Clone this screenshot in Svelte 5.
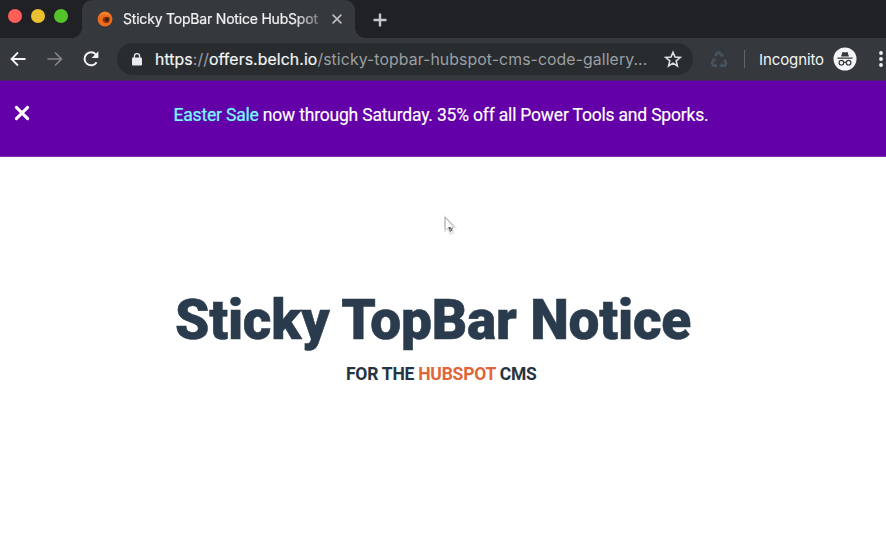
<script>
  const lights = ['#ff5f57', '#e9c12e', '#53c22b'];
</script>

<div class="window">
  <header class="tabs">
    <div class="lights">
      {#each lights as color}
        <i style="background: {color}"></i>
      {/each}
    </div>
    <div class="tab">
      <svg class="favicon" width="16" height="16" viewBox="0 0 16 16">
        <circle cx="8" cy="8" r="7.4" fill="#ee6b1c" />
        <path d="M2 4.5Q8-2 14 5Q8 2 2 4.5Z" fill="#f98a37" />
        <path d="M6 7Q8.5 5.2 12.4 6.2Q13.4 9.5 11 12Q6.4 12.4 5.8 9.4Z" fill="#8a3510" />
        <circle cx="10" cy="8.6" r="2" fill="#4a1a0a" />
      </svg>
      <span class="title">Sticky TopBar Notice HubSpot</span>
      <svg class="close" width="12" height="12" viewBox="0 0 12 12"><path d="M1.6 1.6l8.8 8.8M10.4 1.6l-8.8 8.8" stroke="#bfc1c4" stroke-width="1.5" /></svg>
    </div>
    <svg class="plus" width="14" height="14" viewBox="0 0 14 14"><path d="M7 .5v13M.5 7h13" stroke="#c3c8ca" stroke-width="2.4" /></svg>
  </header>

  <div class="toolbar">
    <svg class="back" width="16" height="16" viewBox="0 0 16 16"><path d="M15.5 8H2M8 1.5L1.5 8L8 14.5" fill="none" stroke="#f3f4f5" stroke-width="1.8" /></svg>
    <svg class="forward" width="16" height="16" viewBox="0 0 16 16"><path d="M.5 8H14M8 1.5L14.5 8L8 14.5" fill="none" stroke="#84868a" stroke-width="1.6" /></svg>
    <svg class="reload" width="18" height="18" viewBox="0 0 18 18">
      <path d="M14.6 12.2A6.5 6.5 0 1 1 13.8 4.4L15 5.8" fill="none" stroke="#f3f4f5" stroke-width="2" />
      <path d="M16.4 1.2V8H9.6Z" fill="#f3f4f5" />
    </svg>
    <div class="address">
      <svg class="lock" width="10" height="13" viewBox="0 0 10 13">
        <rect x="0" y="4.4" width="10" height="8.2" rx="1" fill="#e8eaed" />
        <path d="M2.4 5V3.3a2.6 2.6 0 0 1 5.2 0V5" fill="none" stroke="#e8eaed" stroke-width="1.3" />
      </svg>
      <span class="url"><b>https</b>://<b>offers.belch.io</b>/sticky-topbar-hubspot-cms-code-gallery...</span>
      <svg class="star" width="18" height="18" viewBox="0 0 18 18"><path d="M9 2.3l2 4.8 5.2.4-4 3.4 1.2 5.1L9 13.2l-4.4 2.8 1.2-5.1-4-3.4 5.2-.4Z" fill="none" stroke="#dddfe1" stroke-width="1.6" /></svg>
    </div>
    <svg class="recycle" width="18" height="17" viewBox="0 0 18 17">
      <g fill="none" stroke="#46535e" stroke-width="2.6">
        <path d="M5.1 5.1L7.4 1.8H9.8L11.4 4.4" />
        <path d="M14.4 8.6L16 12.2L14.8 14.6H11.5" />
        <path d="M7 14.6H3.4L2 12L3.4 9.2" />
      </g>
      <path d="M9.6 5.4h4V2ZM12 12v4.8l-2.6-2.4ZM1.2 7.8l4-.8.8 3.6Z" fill="#46535e" />
    </svg>
    <i class="divider"></i>
    <span class="incognito">Incognito</span>
    <svg class="avatar" width="24" height="24" viewBox="0 0 24 24">
      <circle cx="12" cy="12" r="11.5" fill="#f4f5f6" />
      <path d="M8.1 9.5L9.3 5.4Q9.5 4.8 10.2 5L12 5.5L13.8 5Q14.5 4.8 14.7 5.4L15.9 9.5ZM4.5 10.4h15v1.3h-15Z" fill="#34373b" />
      <g fill="none" stroke="#34373b" stroke-width="1.2"><circle cx="8.4" cy="15.7" r="2.3" /><circle cx="15.6" cy="15.7" r="2.3" /><path d="M10.7 15.6q1.3-.8 2.6 0" /></g>
    </svg>
    <svg class="menu" width="4" height="16" viewBox="0 0 4 16" fill="#f1f2f3"><circle cx="2" cy="2" r="1.9" /><circle cx="2" cy="8" r="1.9" /><circle cx="2" cy="14" r="1.9" /></svg>
  </div>

  <div class="notice">
    <svg class="dismiss" width="16" height="16" viewBox="0 0 16 16"><path d="M2.4 2.4l11.2 11.2M13.6 2.4L2.4 13.6" stroke="#fff" stroke-width="3.1" stroke-linecap="round" /></svg>
    <p><span>Easter Sale</span> now through Saturday. 35% off all Power Tools and Sporks.</p>
  </div>

  <main>
    <h1>Sticky TopBar Notice</h1>
    <h2>FOR THE <em>HUBSPOT</em> CMS</h2>
  </main>

  <svg class="cursor" width="14" height="22" viewBox="0 0 14 22">
    <path d="M2 2V16L5.2 13.2L7.5 19L10.3 17.8L8 12.3H12Z" fill="#fff" stroke="#e4e4e6" stroke-width="1.8" />
    <path d="M2 2V14.5M2 2L11 11.8" fill="none" stroke="#a4a4aa" stroke-width=".8" />
    <path d="M5 13.5L6.2 12.2L7.2 16.5L8.4 15.5M6.8 12L9 16M9.3 12.6L8.6 14.6" fill="none" stroke="#333" stroke-width=".8" />
  </svg>
</div>

<style>
  :global(body) { margin: 0; background: #fff; }
  .window { position: relative; width: 886px; height: 537px; overflow: hidden; display: flex; flex-direction: column; font-family: Roboto, sans-serif; }
  svg { display: block; flex: none; }
  .tabs { height: 38px; flex: none; display: flex; background: #202124; }
  .lights { display: flex; gap: 9px; width: 74.5px; padding: 8.5px 0 0 7.5px; }
  .lights i { width: 14px; height: 14px; border-radius: 50%; }
  .tab { position: relative; width: 273px; height: 38px; box-sizing: border-box; display: flex; align-items: center; padding-left: 15px; background: #35383c; border-radius: 10px 10px 0 0; }
  .tab::before, .tab::after { content: ''; position: absolute; bottom: 0; width: 10px; height: 10px; }
  .tab::before { left: -10px; background: radial-gradient(circle at 0 0, transparent 9.5px, #35383c 10px); }
  .tab::after { right: -10px; background: radial-gradient(circle at 100% 0, transparent 9.5px, #35383c 10px); }
  .title { width: 198px; margin-left: 10px; white-space: nowrap; font: 400 14px/20px Inter, sans-serif; letter-spacing: -.2px; color: #f0f1f2; -webkit-text-stroke: .2px; -webkit-mask-image: linear-gradient(90deg, #000 172px, transparent 208px); mask-image: linear-gradient(90deg, #000 172px, transparent 208px); }
  .close { margin-left: 10px; }
  .plus { margin: 13px 0 0 18px; }
  .toolbar { height: 42px; flex: none; display: flex; align-items: center; background: #35383c; border-bottom: 1px solid #4c2368; }
  .back { margin-left: 10px; }
  .forward { margin-left: 21px; }
  .reload { margin-left: 19px; }
  .address { width: 576px; height: 32px; margin-left: 17px; display: flex; flex: none; align-items: center; background: #282c2f; border-radius: 16px; }
  .lock { margin-left: 15px; }
  .url { width: 495px; margin-left: 13px; padding-top: 1px; font: 400 15.8px/22px Inter, sans-serif; letter-spacing: .09px; color: #9b9fa3; white-space: nowrap; }
  .url b { font-weight: 400; color: #f4f5f6; -webkit-text-stroke: .2px; }
  .star { margin-left: 14px; }
  .recycle { margin-left: 17px; }
  .divider { width: 1px; height: 18px; flex: none; margin-left: 16px; background: #62656a; }
  .incognito { width: 66px; margin-left: 14px; padding-top: 1px; font: 400 15px/22px Inter, sans-serif; letter-spacing: -.1px; color: #f3f4f5; white-space: nowrap; }
  .avatar { margin-left: 8px; }
  .menu { margin-left: 22px; }
  .notice { height: 76px; box-sizing: border-box; flex: none; display: flex; align-items: flex-start; background: #6400a8; border-bottom: 1px solid #7d2db4; }
  .dismiss { margin: 23.5px 0 0 14px; }
  p { margin: 22px 0 0 143.5px; font-size: 17.5px; line-height: 24px; letter-spacing: -.19px; color: #fff; -webkit-text-stroke: .15px; white-space: nowrap; }
  p span { color: #87f3fb; text-shadow: 0 0 1px #087ce0; }
  main { display: flex; flex-direction: column; color: #293b4c; }
  h1 { margin: 128px 0 0 175px; font-size: 55px; line-height: 70px; font-weight: 900; letter-spacing: -.2px; -webkit-text-stroke: .5px; white-space: nowrap; }
  h2 { margin: 8px 0 0 346px; font-size: 17.5px; line-height: 22px; font-weight: 700; letter-spacing: -.24px; color: #263441; white-space: nowrap; }
  em { font-style: normal; color: #e0663a; }
  .cursor { position: absolute; left: 442.5px; top: 215px; }
</style>
